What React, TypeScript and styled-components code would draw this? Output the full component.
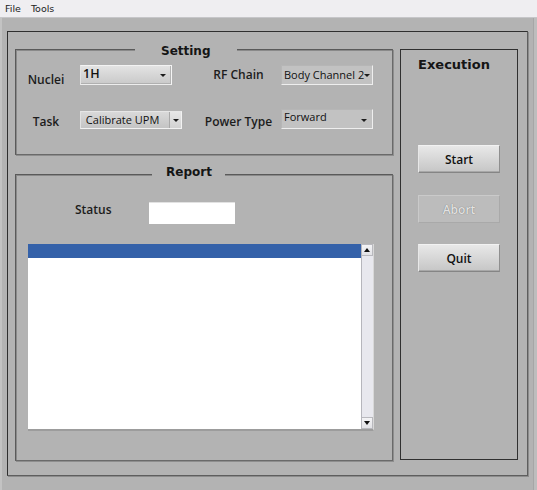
import React from "react";
import styled, { createGlobalStyle, css } from "styled-components";

const GlobalStyle = createGlobalStyle`
  html, body { margin: 0; padding: 0; background: #b3b3b3; }
  * { box-sizing: border-box; }
`;

const Window = styled.div`
  width: 537px;
  height: 490px;
  display: flex;
  flex-direction: column;
  background: #b3b3b3;
  font-family: "Open Sans", "DejaVu Sans", sans-serif;
  color: #1a1a1a;
  overflow: hidden;
`;

const MenuBar = styled.div`
  height: 18px;
  flex: none;
  display: flex;
  align-items: center;
  padding-left: 4px;
  background: #efeef1;
  border-bottom: 1px solid #c6c6c9;
`;

const MenuItem = styled.span`
  font-family: "DejaVu Sans", sans-serif;
  font-size: 9.5px;
  color: #222;
  padding: 0 9px 1px 1px;
`;

const Body = styled.div`
  flex: 1;
  display: flex;
`;

const Main = styled.div`
  flex: 1;
  border-left: 2px solid #c3c3c3;
  padding: 13px 5px 0 5px;
`;

const EdgeStrip = styled.div`
  width: 4px;
  background: #bdbdbd;
  border-left: 1px solid #a6a6a6;
`;

const OuterPanel = styled.div`
  height: 445px;
  border: 1px solid #2f2f2f;
  border-right-color: #5e5e5e;
  border-bottom-color: #5e5e5e;
  box-shadow: 1px 1px 0 #8c8c8c;
  padding: 17px 9px 0 7px;
  display: flex;
  gap: 7px;
`;

const LeftColumn = styled.div`
  width: 378px;
  display: flex;
  flex-direction: column;
  gap: 19px;
`;

const Panel = styled.div<{ $h: number }>`
  position: relative;
  height: ${(p) => p.$h}px;
  border: 1px solid #5a5a5a;
  border-right-color: #6a6a6a;
  border-bottom-color: #6a6a6a;
  box-shadow: inset 1px 1px 0 #8a8a8a, 1px 1px 0 #8e8e8e;
`;

const Legend = styled.div<{ $left: number; $top: number; $padL: number; $padR: number }>`
  position: absolute;
  top: ${(p) => p.$top}px;
  left: ${(p) => p.$left}px;
  padding: 0 ${(p) => p.$padR}px 0 ${(p) => p.$padL}px;
  background: #b3b3b3;
  font-family: "DejaVu Sans", sans-serif;
  font-weight: bold;
  font-size: 12px;
  line-height: 16px;
  color: #151515;
`;

const SettingGrid = styled.div`
  display: grid;
  grid-template-columns: 59px 102px 99px 93px;
  grid-template-rows: 20px 20px;
  row-gap: 24px;
  padding: 15px 0 0 5px;
`;

const Label = styled.div<{ $dy: number; $padL?: number; $padR?: number }>`
  align-self: start;
  margin-top: ${(p) => p.$dy}px;
  padding-left: ${(p) => p.$padL ?? 0}px;
  padding-right: ${(p) => p.$padR ?? 0}px;
  text-align: center;
  font-family: "Open Sans", sans-serif;
  font-weight: 600;
  font-size: 12px;
  line-height: 14px;
  color: #1c1c1c;
  white-space: nowrap;
`;

type Variant = "raised" | "split" | "flat";

const Select = styled.div<{ $w: number; $h: number; $variant: Variant; $textAlign: "top" | "center" }>`
  width: ${(p) => p.$w}px;
  height: ${(p) => p.$h}px;
  align-self: end;
  display: flex;
  align-items: ${(p) => (p.$textAlign === "top" ? "flex-start" : "center")};
  font-family: "Open Sans", sans-serif;
  font-size: 11px;
  line-height: 14px;
  color: #111;
  border: 1px solid;
  ${(p) =>
    p.$variant === "raised" &&
    css`
      background: linear-gradient(#e3e3e3, #c9c9c9);
      border-color: #f3f3f3 #f5f5f5 #ededed #e4e4e4;
      box-shadow: inset 0 -1px 0 #b0b0b0, inset -1px 0 0 #b4b4b4;
    `}
  ${(p) =>
    p.$variant === "split" &&
    css`
      background: linear-gradient(#d9d9d9, #c4c4c4);
      border-color: #e6e6e6 #f2f2f2 #f2f2f2 #e2e2e2;
    `}
  ${(p) =>
    p.$variant === "flat" &&
    css`
      background: #c2c2c2;
      border-color: #b6b6b6 #eeeeee #eeeeee #b6b6b6;
    `}
`;

const SelectText = styled.span<{ $big?: boolean }>`
  flex: 1;
  padding-left: 2px;
  white-space: nowrap;
  font-size: ${(p) => (p.$big ? 12.5 : 11)}px;
  line-height: ${(p) => (p.$big ? 16 : 14)}px;
  font-weight: ${(p) => (p.$big ? 600 : 400)};
`;

const Arrow = styled.span<{ $mr: number; $dy: number }>`
  width: 0;
  height: 0;
  margin-right: ${(p) => p.$mr}px;
  margin-top: ${(p) => p.$dy}px;
  border-left: 3px solid transparent;
  border-right: 3px solid transparent;
  border-top: 3px solid #1c1c1c;
  align-self: ${(p) => (p.$dy ? "flex-start" : "center")};
`;

const ArrowBox = styled.span`
  width: 12px;
  align-self: stretch;
  display: flex;
  align-items: center;
  justify-content: center;
  background: linear-gradient(#e6e6e6, #d2d2d2);
  border-left: 1px solid #a9a9a9;
`;

const StatusRow = styled.div`
  display: flex;
  align-items: center;
  padding: 27px 0 0 59px;
`;

const StatusLabel = styled.div`
  width: 74px;
  margin-top: -7px;
  font-family: "Open Sans", sans-serif;
  font-weight: 600;
  font-size: 12px;
  line-height: 14px;
  color: #1c1c1c;
`;

const StatusBox = styled.div`
  width: 86px;
  height: 22px;
  background: #ffffff;
  border-top: 1px solid #e2e2e2;
`;

const ListBox = styled.div`
  margin: 20px 0 0 12px;
  width: 346px;
  height: 187px;
  display: flex;
  background: #ffffff;
  border-bottom: 2px solid #9c9c9c;
  border-right: 1px solid #d8d8d8;
`;

const ListRows = styled.div`
  flex: 1;
  display: flex;
  flex-direction: column;
`;

const SelectedRow = styled.div`
  height: 14px;
  background: #3461a9;
`;

const ScrollBar = styled.div`
  width: 12px;
  display: flex;
  flex-direction: column;
  justify-content: space-between;
  background: #e8e8ee;
  border-left: 1px solid #b6b6bc;
`;

const ScrollButton = styled.div`
  height: 12px;
  display: flex;
  align-items: center;
  justify-content: center;
  background: linear-gradient(#f4f4f6, #e2e2e6);
  border: 1px solid #b9b9be;
  border-left: none;
`;

const Tri = styled.span<{ $up?: boolean }>`
  width: 0;
  height: 0;
  border-left: 3px solid transparent;
  border-right: 3px solid transparent;
  ${(p) =>
    p.$up
      ? css`border-bottom: 4px solid #111;`
      : css`border-top: 4px solid #111;`}
`;

const ExecPanel = styled.div`
  flex: 1;
  height: 411px;
  border: 1px solid #303030;
  display: flex;
  flex-direction: column;
  align-items: center;
`;

const ExecTitle = styled.div`
  margin-top: 7px;
  padding-right: 10px;
  font-family: "DejaVu Sans", sans-serif;
  font-weight: bold;
  font-size: 13px;
  line-height: 16px;
  color: #151515;
`;

const Button = styled.div<{ $mt: number; $disabled?: boolean }>`
  margin-top: ${(p) => p.$mt}px;
  width: 82px;
  height: 28px;
  display: flex;
  align-items: center;
  justify-content: center;
  font-family: "Open Sans", sans-serif;
  font-weight: 600;
  font-size: 12px;
  border: 1px solid;
  ${(p) =>
    p.$disabled
      ? css`
          background: #bcbcbc;
          border-color: #cacaca #a9a9a9 #a9a9a9 #cacaca;
          color: #e2e2e2;
          text-shadow: 0 0 1px #666666;
        `
      : css`
          background: linear-gradient(#e8e8e8, #c6c6c6);
          border-color: #f2f2f2 #8f8f8f #858585 #e8e8e8;
          box-shadow: inset 0 -1px 0 #a8a8a8;
          color: #111;
        `}
`;

export default function App() {
  return (
    <>
      <GlobalStyle />
      <Window>
        <MenuBar>
          <MenuItem>File</MenuItem>
          <MenuItem>Tools</MenuItem>
        </MenuBar>
        <Body>
          <Main>
            <OuterPanel>
              <LeftColumn>
                <Panel $h={106}>
                  <Legend $left={119} $top={-7} $padL={26} $padR={26}>
                    Setting
                  </Legend>
                  <SettingGrid>
                    <Label $dy={8} $padR={9}>
                      Nuclei
                    </Label>
                    <Select $w={92} $h={20} $variant="raised" $textAlign="top">
                      <SelectText $big>1H</SelectText>
                      <Arrow $mr={5} $dy={0} />
                    </Select>
                    <Label $dy={3} $padL={14}>
                      RF Chain
                    </Label>
                    <Select $w={92} $h={20} $variant="flat" $textAlign="center">
                      <SelectText>Body Channel 2</SelectText>
                      <Arrow $mr={2} $dy={0} />
                    </Select>
                    <Label $dy={6} $padR={9}>
                      Task
                    </Label>
                    <Select $w={102} $h={18} $variant="split" $textAlign="center">
                      <SelectText>&nbsp;Calibrate UPM</SelectText>
                      <ArrowBox>
                        <Arrow $mr={0} $dy={0} />
                      </ArrowBox>
                    </Select>
                    <Label $dy={6} $padL={14}>
                      Power Type
                    </Label>
                    <Select $w={92} $h={20} $variant="flat" $textAlign="top">
                      <SelectText>Forward</SelectText>
                      <Arrow $mr={5} $dy={9} />
                    </Select>
                  </SettingGrid>
                </Panel>
                <Panel $h={287}>
                  <Legend $left={136} $top={-11} $padL={14} $padR={13}>
                    Report
                  </Legend>
                  <StatusRow>
                    <StatusLabel>Status</StatusLabel>
                    <StatusBox />
                  </StatusRow>
                  <ListBox>
                    <ListRows>
                      <SelectedRow />
                    </ListRows>
                    <ScrollBar>
                      <ScrollButton>
                        <Tri $up />
                      </ScrollButton>
                      <ScrollButton>
                        <Tri />
                      </ScrollButton>
                    </ScrollBar>
                  </ListBox>
                </Panel>
              </LeftColumn>
              <ExecPanel>
                <ExecTitle>Execution</ExecTitle>
                <Button $mt={72}>Start</Button>
                <Button $mt={22} $disabled>
                  Abort
                </Button>
                <Button $mt={21}>Quit</Button>
              </ExecPanel>
            </OuterPanel>
          </Main>
          <EdgeStrip />
        </Body>
      </Window>
    </>
  );
}
